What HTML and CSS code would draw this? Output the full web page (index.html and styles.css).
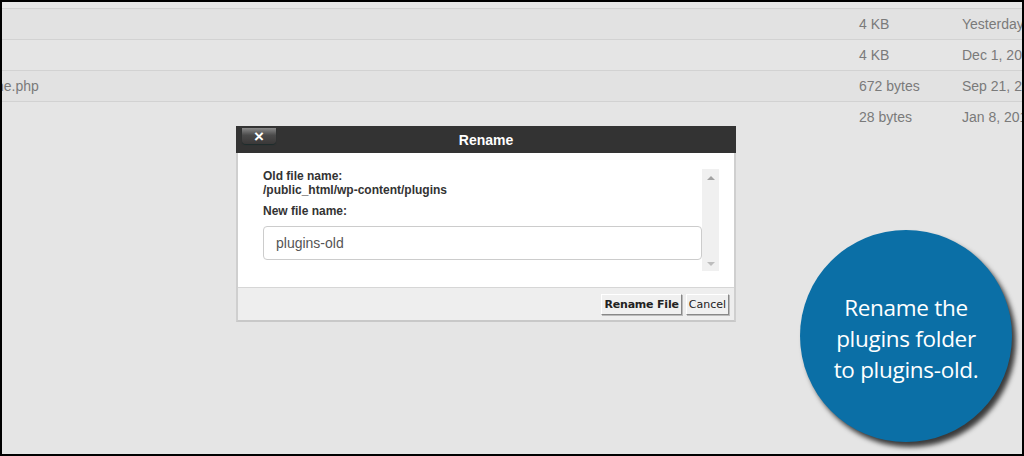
FILE: index.html
```html
<!DOCTYPE html>
<html>
<head>
<meta charset="utf-8">
<link rel="stylesheet" href="styles.css">
</head>
<body>
<div class="frame">
  <div class="list">
    <div class="row top"></div>
    <div class="row alt"><div class="name"></div><div class="size">4 KB</div><div class="date">Yesterday</div></div>
    <div class="row"><div class="name"></div><div class="size">4 KB</div><div class="date">Dec 1, 2017</div></div>
    <div class="row alt"><div class="name"><span class="clip">ne.php</span></div><div class="size">672 bytes</div><div class="date">Sep 21, 2017</div></div>
    <div class="row last"><div class="name"></div><div class="size">28 bytes</div><div class="date">Jan 8, 2017</div></div>
  </div>

  <div class="dialog">
    <div class="titlebar">
      <div class="close">&times;</div>
      <div class="title">Rename</div>
    </div>
    <div class="body">
      <div class="fields">
        <div class="label">Old file name:</div>
        <div class="label">/public_html/wp-content/plugins</div>
        <div class="label gap">New file name:</div>
        <div class="input">plugins-old</div>
      </div>
      <div class="scroll">
        <span class="arrow up"></span>
        <span class="arrow down"></span>
      </div>
    </div>
    <div class="footer">
      <button class="btn strong">Rename File</button>
      <button class="btn">Cancel</button>
    </div>
  </div>

  <div class="badge">Rename the<br>plugins folder<br>to plugins-old.</div>
</div>
</body>
</html>
```

FILE: styles.css
```css
html, body {
  margin: 0;
  padding: 0;
  background: #000;
}
.frame {
  position: relative;
  margin: 2px;
  width: 1020px;
  height: 452px;
  background: #e5e5e5;
  overflow: hidden;
  font-family: "Liberation Sans", Arial, sans-serif;
}
.list {
  display: flex;
  flex-direction: column;
}
.row {
  display: flex;
  align-items: center;
  height: 30px;
  border-bottom: 1px solid #d2d2d2;
  font-size: 14px;
  color: #7a7a7a;
}
.row.top {
  height: 6px;
  background: #e8e8e8;
}
.row.alt {
  background: #e2e2e2;
}
.row.last {
  border-bottom: none;
}
.name {
  width: 857px;
  flex-shrink: 0;
  overflow: hidden;
}
.clip {
  display: inline-block;
  margin-left: -6px;
}
.size {
  width: 103px;
  flex-shrink: 0;
}
.date {
  flex-shrink: 0;
  white-space: nowrap;
}
.dialog {
  position: absolute;
  left: 234px;
  top: 124px;
  width: 500px;
  display: flex;
  flex-direction: column;
  border-left: 2px solid #cfcfcf;
  border-right: 2px solid #cfcfcf;
  border-bottom: 2px solid #c8c8c8;
  box-sizing: border-box;
}
.titlebar {
  position: relative;
  height: 27px;
  background: #333;
  margin: 0 -2px;
  display: flex;
  align-items: center;
  justify-content: center;
}
.title {
  color: #fff;
  font-weight: bold;
  font-size: 14px;
}
.close {
  position: absolute;
  left: 6px;
  top: 2px;
  width: 34px;
  height: 16px;
  border-radius: 0 0 4px 4px;
  background: linear-gradient(#8a8a8a, #4a4a4a 45%, #3a3838);
  box-shadow: 0 1px 1px #1c2c2c;
  color: #fff;
  font-family: "Liberation Sans", Arial, sans-serif;
  font-weight: bold;
  font-size: 17px;
  line-height: 17px;
  text-align: center;
}
.body {
  background: #fff;
  height: 134px;
  display: flex;
  padding: 16px 15px 0 25px;
  box-sizing: border-box;
}
.fields {
  flex: 1;
  display: flex;
  flex-direction: column;
  color: #333;
  font-size: 12px;
  font-weight: bold;
}
.label {
  line-height: 14px;
}
.label.gap {
  margin-top: 7px;
}
.input {
  margin-top: 8px;
  height: 32px;
  border: 1px solid #ccc;
  border-radius: 4px;
  font-size: 14px;
  font-weight: normal;
  color: #555;
  padding-left: 12px;
  line-height: 32px;
}
.scroll {
  width: 17px;
  height: 102px;
  background: #f0f0f0;
  display: flex;
  flex-direction: column;
  justify-content: space-between;
  align-items: center;
  padding: 7px 0 5px;
  box-sizing: border-box;
}
.arrow {
  width: 0;
  height: 0;
  border-left: 4px solid transparent;
  border-right: 4px solid transparent;
}
.arrow.up {
  border-bottom: 4px solid #a3a3a3;
}
.arrow.down {
  border-top: 4px solid #bdbdbd;
}
.footer {
  background: #eee;
  height: 33px;
  border-top: 1px solid #d6d6d6;
  display: flex;
  justify-content: flex-end;
  align-items: center;
  gap: 4px;
  padding-right: 5px;
  box-sizing: border-box;
}
.btn {
  font-family: "DejaVu Sans", Verdana, sans-serif;
  font-size: 11px;
  height: 21px;
  padding: 0 2px;
  background: #f0f0f0;
  color: #222;
  border: 1px solid;
  border-color: #fff #888 #888 #fff;
  box-shadow: 1px 1px 0 #bbb;
}
.btn.strong {
  font-weight: bold;
  padding: 0 2px;
  letter-spacing: -0.2px;
}
.badge {
  position: absolute;
  left: 798px;
  top: 228px;
  width: 212px;
  height: 212px;
  border-radius: 50%;
  background: #0b6fa6;
  box-shadow: 4px 5px 5px rgba(0,0,0,0.75);
  color: #fff;
  font-family: "Open Sans", sans-serif;
  font-size: 22.5px;
  line-height: 31px;
  letter-spacing: -0.3px;
  padding-top: 4px;
  box-sizing: border-box;
  display: flex;
  align-items: center;
  justify-content: center;
  text-align: center;
}
```
